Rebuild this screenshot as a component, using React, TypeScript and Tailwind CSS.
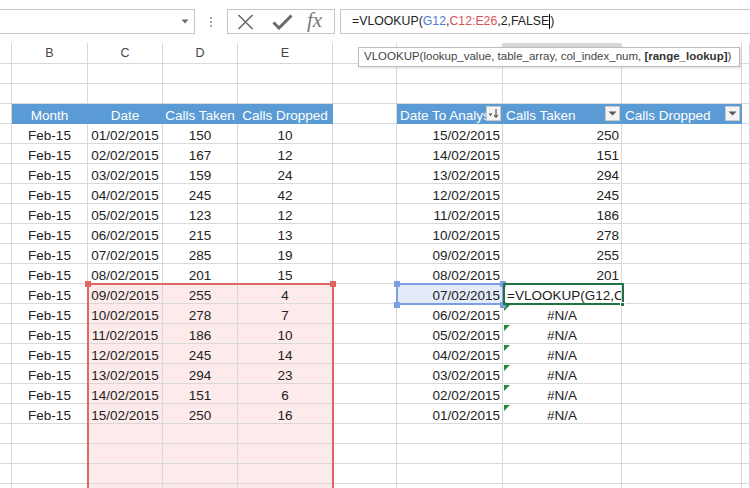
import React from 'react';

// column widths (partial A, B..I, partial J)
const W = [
  'w-[12px]',
  'w-[76px]',
  'w-[75px]',
  'w-[75px]',
  'w-[95px]',
  'w-[64px]',
  'w-[106px]',
  'w-[119px]',
  'w-[120px]',
  'w-[8px]',
];

const LETTERS = ['', 'B', 'C', 'D', 'E', '', '', '', '', ''];

const leftData = [
  ['Feb-15', '01/02/2015', '150', '10'],
  ['Feb-15', '02/02/2015', '167', '12'],
  ['Feb-15', '03/02/2015', '159', '24'],
  ['Feb-15', '04/02/2015', '245', '42'],
  ['Feb-15', '05/02/2015', '123', '12'],
  ['Feb-15', '06/02/2015', '215', '13'],
  ['Feb-15', '07/02/2015', '285', '19'],
  ['Feb-15', '08/02/2015', '201', '15'],
  ['Feb-15', '09/02/2015', '255', '4'],
  ['Feb-15', '10/02/2015', '278', '7'],
  ['Feb-15', '11/02/2015', '186', '10'],
  ['Feb-15', '12/02/2015', '245', '14'],
  ['Feb-15', '13/02/2015', '294', '23'],
  ['Feb-15', '14/02/2015', '151', '6'],
  ['Feb-15', '15/02/2015', '250', '16'],
];

// right table: date, calls taken (null = #N/A, 'f' = formula being typed)
const rightData: [string, string | null][] = [
  ['15/02/2015', '250'],
  ['14/02/2015', '151'],
  ['13/02/2015', '294'],
  ['12/02/2015', '245'],
  ['11/02/2015', '186'],
  ['10/02/2015', '278'],
  ['09/02/2015', '255'],
  ['08/02/2015', '201'],
  ['07/02/2015', 'f'],
  ['06/02/2015', null],
  ['05/02/2015', null],
  ['04/02/2015', null],
  ['03/02/2015', null],
  ['02/02/2015', null],
  ['01/02/2015', null],
];

function Cell({
  col,
  className = '',
  line = 'border-[#d9d9d9]',
  children,
}: {
  col: number;
  className?: string;
  line?: string;
  children?: React.ReactNode;
}) {
  return (
    <div
      className={`${W[col]} ${line} relative h-5 shrink-0 border-r border-b flex items-end pb-[1px] leading-none overflow-hidden whitespace-nowrap ${className}`}
    >
      {children}
    </div>
  );
}

function FilterButton({ sorted = false }: { sorted?: boolean }) {
  return (
    <div className="absolute right-[1px] top-[2px] w-[15px] h-[15px] bg-[#f4f4f4] border border-[#c9c9c9] flex items-center justify-center">
      {sorted ? (
        <svg width="13" height="11" viewBox="0 0 13 11">
          <path d="M1.5 5.5h4l-2 2.5z" fill="#555" />
          <path d="M9 1v8" stroke="#333" strokeWidth="1" />
          <path d="M7 7l2 2.5 2-2.5" stroke="#333" strokeWidth="1" fill="none" />
        </svg>
      ) : (
        <svg width="9" height="5" viewBox="0 0 9 5">
          <path d="M0.5 0.5h8l-4 4z" fill="#555" />
        </svg>
      )}
    </div>
  );
}

function ErrorMark() {
  return (
    <svg className="absolute left-[1px] top-[1px]" width="6" height="6" viewBox="0 0 6 6">
      <path d="M0 0h6L0 6z" fill="#1f8a3c" />
    </svg>
  );
}

function EmptyRow({ pink = false }: { pink?: boolean }) {
  return (
    <div className="flex">
      {W.map((_, i) => (
        <Cell key={i} col={i} className={pink && i >= 2 && i <= 4 ? 'bg-[#fdeaea]' : ''} />
      ))}
    </div>
  );
}

export default function App() {
  const blue = 'bg-[#5b9bd5] text-white';
  const blueLine = 'border-[#5b9bd5]';

  return (
    <div
      className="relative w-[750px] h-[488px] overflow-hidden bg-white text-[#222]"
      style={{ fontFamily: '"Liberation Sans", Arial, sans-serif' }}
    >
      {/* Formula bar */}
      <div className="flex items-start pt-[9px] h-[43px]">
        <div className="w-[195px] shrink-0 h-[25px] border border-l-0 border-[#c6c6c6] flex items-center justify-end pr-[5px]">
          <svg width="8" height="5" viewBox="0 0 8 5">
            <path d="M0.5 0.5h7l-3.5 4z" fill="#6b6b6b" />
          </svg>
        </div>
        <div className="w-[32px] shrink-0 h-[25px] flex flex-col items-center justify-center gap-[2px]">
          <span className="w-[2px] h-[2px] bg-[#a6a6a6]" />
          <span className="w-[2px] h-[2px] bg-[#a6a6a6]" />
          <span className="w-[2px] h-[2px] bg-[#a6a6a6]" />
        </div>
        <div className="w-[108px] shrink-0 h-[25px] border border-[#c6c6c6] flex items-center">
          <svg className="ml-[9px]" width="17" height="16" viewBox="0 0 17 16">
            <path d="M1.5 1l14 14M15.5 1l-14 14" stroke="#6a6a6a" strokeWidth="1.6" />
          </svg>
          <svg className="ml-[18px]" width="21" height="16" viewBox="0 0 21 16">
            <path d="M1.5 8.5l5.5 5.5L19.5 1.5" stroke="#6a6a6a" strokeWidth="3" fill="none" />
          </svg>
          <span
            className="ml-[14px] text-[21px] leading-none italic text-[#7a7a7a] -mt-[2px]"
            style={{ fontFamily: '"Liberation Serif", "Times New Roman", serif' }}
          >
            fx
          </span>
        </div>
        <div className="ml-[5px] flex-1 min-w-0 h-[25px] border border-r-0 border-[#c6c6c6] flex items-center pl-[11px] text-[12.3px] text-[#222] whitespace-nowrap">
          <span>=VLOOKUP(</span>
          <span className="text-[#4f7bd0]">G12</span>
          <span>,</span>
          <span className="text-[#d65353]">C12:E26</span>
          <span>,2,FALSE</span>
          <span className="w-px h-[15px] bg-black" />
          <span>)</span>
        </div>
      </div>

      {/* Column headers */}
      <div className="flex h-[21px]">
        {W.map((_, i) => (
          <div
            key={i}
            className={`${W[i]} shrink-0 h-[21px] border-r border-b border-[#d9d9d9] flex items-center justify-center text-[12.5px] text-[#444] ${
              i === 7 ? 'bg-[#d6d6d6]' : ''
            }`}
          >
            {LETTERS[i]}
          </div>
        ))}
      </div>

      {/* Sheet */}
      <div className="text-[13.5px]">
        <EmptyRow />
        <EmptyRow />

        {/* table headers */}
        <div className="flex">
          <Cell col={0} />
          <Cell col={1} line={blueLine} className={`justify-center ${blue}`}>Month</Cell>
          <Cell col={2} line={blueLine} className={`justify-center ${blue}`}>Date</Cell>
          <Cell col={3} line={blueLine} className={`justify-center ${blue}`}>Calls Taken</Cell>
          <Cell col={4} line={blueLine} className={`justify-center ${blue}`}>Calls Dropped</Cell>
          <Cell col={5} />
          <Cell col={6} line={blueLine} className={`pl-[3px] ${blue}`}>
            Date To Analyse
            <FilterButton sorted />
          </Cell>
          <Cell col={7} line={blueLine} className={`pl-[3px] ${blue}`}>
            Calls Taken
            <FilterButton />
          </Cell>
          <Cell col={8} line={blueLine} className={`pl-[3px] ${blue}`}>
            Calls Dropped
            <FilterButton />
          </Cell>
          <Cell col={9} />
        </div>

        {leftData.map((row, r) => {
          const [date, taken] = rightData[r];
          const pink = r >= 8 ? 'bg-[#fdeaea]' : '';
          return (
            <div key={r} className="flex">
              <Cell col={0} />
              <Cell col={1} className="justify-center">{row[0]}</Cell>
              <Cell col={2} className={`justify-center ${pink}`}>{row[1]}</Cell>
              <Cell col={3} className={`justify-center ${pink}`}>{row[2]}</Cell>
              <Cell col={4} className={`justify-center ${pink}`}>{row[3]}</Cell>
              <Cell col={5} />
              <Cell col={6} className={`justify-end pr-[2px] ${taken === 'f' ? 'bg-[#e4ebf8]' : ''}`}>
                {date}
              </Cell>
              {taken === 'f' ? (
                <Cell col={7} className="pl-[4px]">=VLOOKUP(G12,C12:E26,2,FALSE)</Cell>
              ) : taken === null ? (
                <Cell col={7} className="justify-center">
                  <ErrorMark />
                  #N/A
                </Cell>
              ) : (
                <Cell col={7} className="justify-end pr-[2px]">{taken}</Cell>
              )}
              <Cell col={8} />
              <Cell col={9} />
            </div>
          );
        })}

        <EmptyRow pink />
        <EmptyRow pink />
        <EmptyRow pink />
        <EmptyRow pink />
      </div>

      {/* C12:E26 reference highlight */}
      <div className="absolute left-[87px] top-[283px] w-[247px] h-[230px] border-2 border-[#e06666] pointer-events-none" />
      <div className="absolute left-[85px] top-[281px] w-[6px] h-[6px] bg-[#e06666]" />
      <div className="absolute left-[330px] top-[281px] w-[6px] h-[6px] bg-[#e06666]" />

      {/* G12 reference highlight */}
      <div className="absolute left-[396px] top-[283px] w-[108px] h-[22px] border-2 border-[#7d9ee0] pointer-events-none" />
      <div className="absolute left-[394px] top-[281px] w-[6px] h-[6px] bg-[#7d9ee0]" />
      <div className="absolute left-[500px] top-[281px] w-[6px] h-[6px] bg-[#7d9ee0]" />
      <div className="absolute left-[394px] top-[302px] w-[6px] h-[6px] bg-[#7d9ee0]" />
      <div className="absolute left-[500px] top-[302px] w-[6px] h-[6px] bg-[#7d9ee0]" />

      {/* active cell H12 */}
      <div className="absolute left-[503px] top-[283px] w-[121px] h-[22px] border-2 border-[#217346] pointer-events-none" />
      <div className="absolute left-[620px] top-[302px] w-[5px] h-[5px] bg-[#217346] border border-white" />

      {/* function tooltip */}
      <div className="absolute left-[358px] top-[47px] w-[382px] h-[20px] bg-white border border-[#bdbdbd] shadow-[1px_1px_2px_rgba(0,0,0,0.15)] flex items-center pl-[5px] text-[11.5px] text-[#444] whitespace-nowrap">
        VLOOKUP(lookup_value, table_array, col_index_num,&nbsp;<b className="font-bold text-[#333]">[range_lookup]</b>)
      </div>
    </div>
  );
}
